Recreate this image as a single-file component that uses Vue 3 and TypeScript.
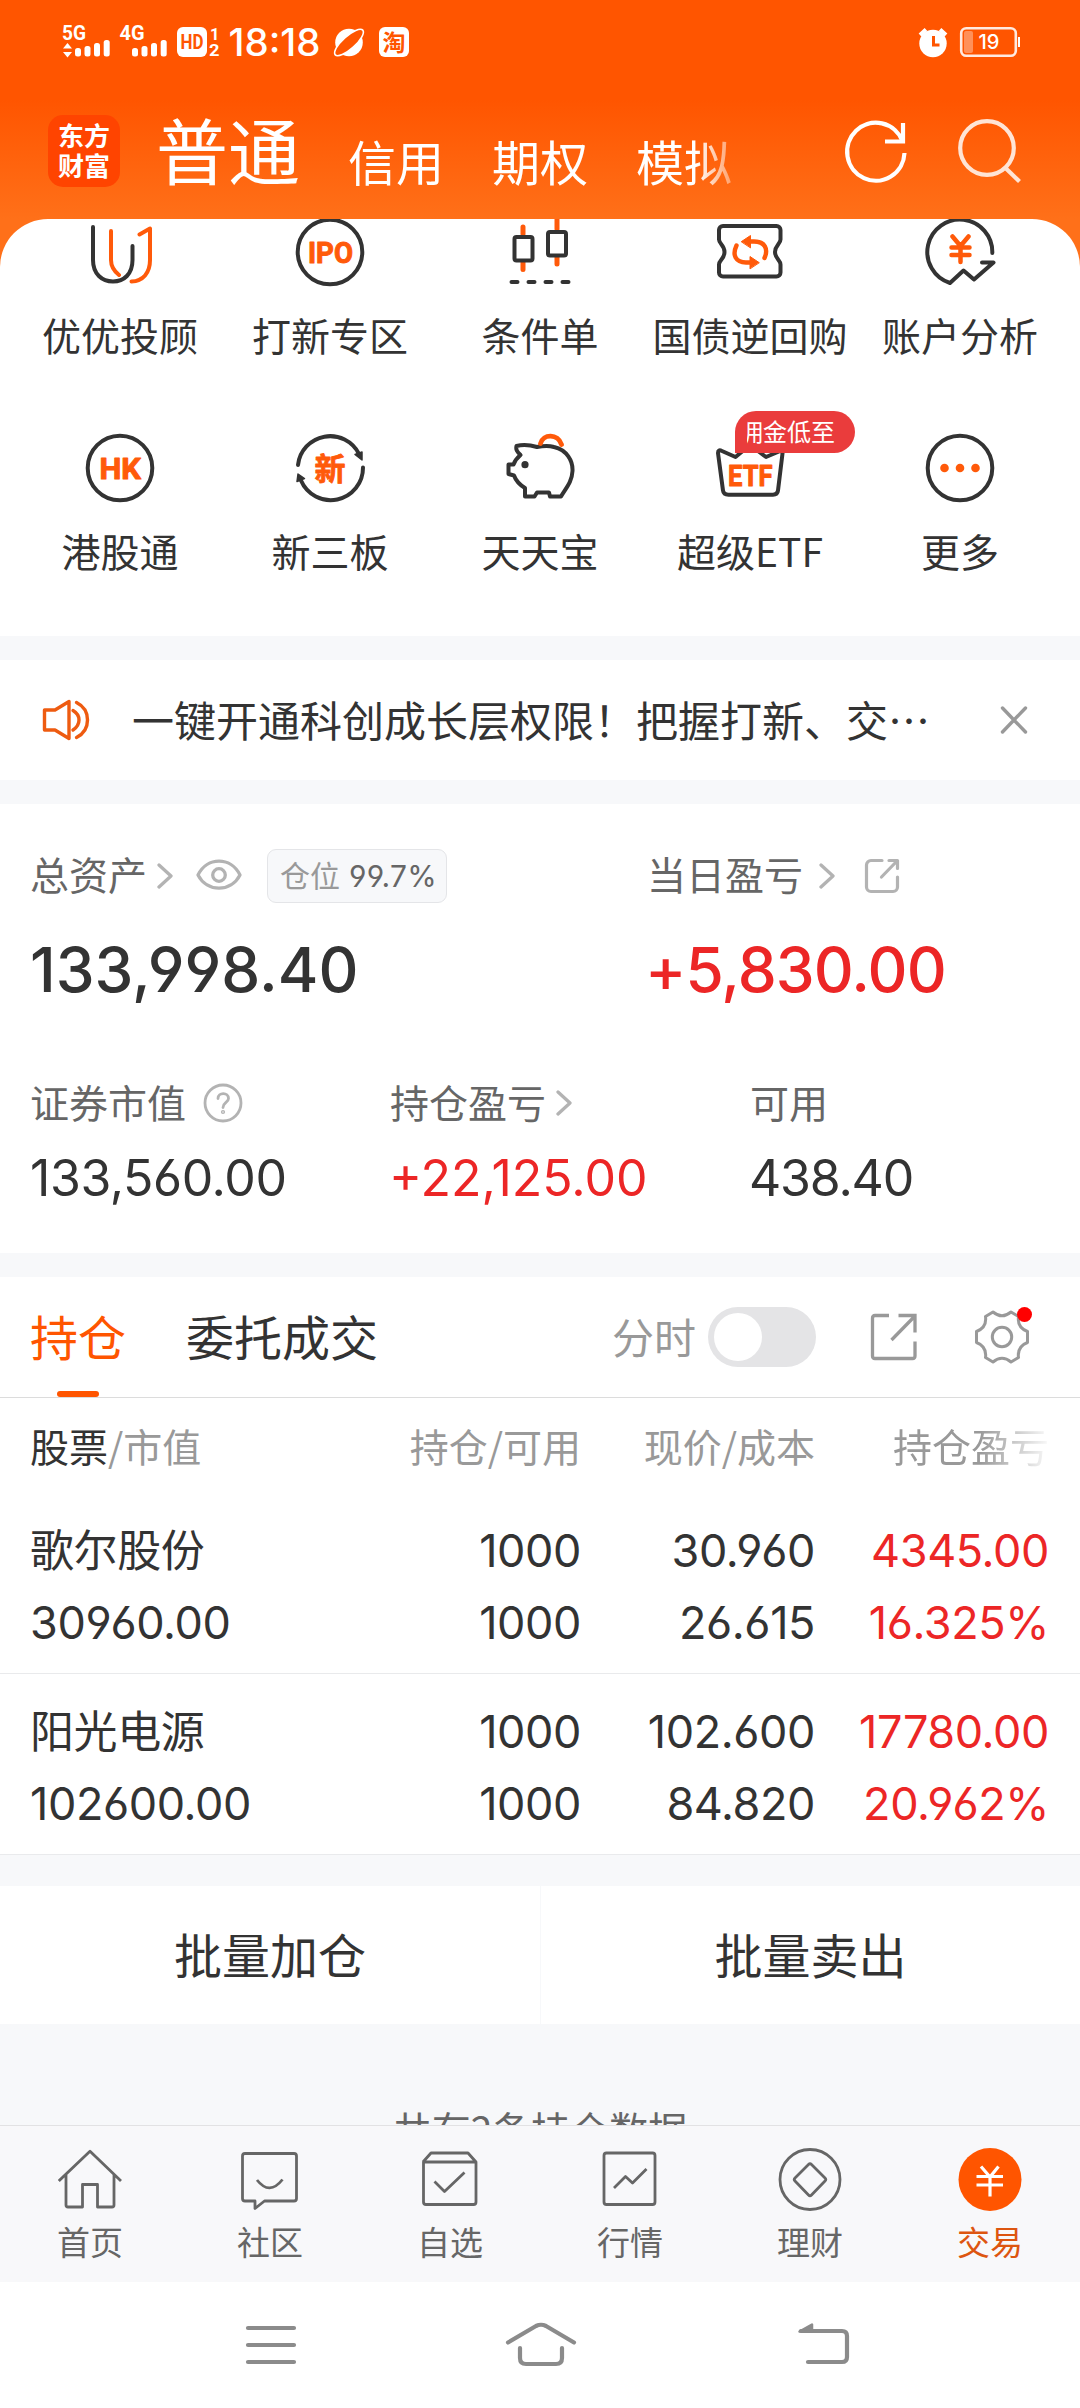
<script setup lang="ts">
interface Service {
  id: string
  label: string
  badge?: string
}
interface Holding {
  name: string
  value: string
  held: string
  usable: string
  price: string
  cost: string
  profit: string
  rate: string
}

const accountTabs: string[] = ['普通', '信用', '期权', '模拟']

const services: Service[] = [
  { id: 'advisor', label: '优优投顾' },
  { id: 'ipo', label: '打新专区' },
  { id: 'condition', label: '条件单' },
  { id: 'repo', label: '国债逆回购' },
  { id: 'analysis', label: '账户分析' },
  { id: 'hk', label: '港股通' },
  { id: 'neeq', label: '新三板' },
  { id: 'piggy', label: '天天宝' },
  { id: 'etf', label: '超级ETF', badge: '佣金低至' },
  { id: 'more', label: '更多' },
]

const holdings: Holding[] = [
  { name: '歌尔股份', value: '30960.00', held: '1000', usable: '1000', price: '30.960', cost: '26.615', profit: '4345.00', rate: '16.325%' },
  { name: '阳光电源', value: '102600.00', held: '1000', usable: '1000', price: '102.600', cost: '84.820', profit: '17780.00', rate: '20.962%' },
]

const navItems = [
  { id: 'home', label: '首页' },
  { id: 'community', label: '社区' },
  { id: 'watchlist', label: '自选' },
  { id: 'market', label: '行情' },
  { id: 'wealth', label: '理财' },
  { id: 'trade', label: '交易' },
]
</script>

<template>
  <div class="screen" lang="zh-CN">
    <header class="top">
      <div class="status">
        <svg class="status-left" width="360" height="40" viewBox="60 22 360 40" fill="#fff">
          <text x="62" y="40" class="st-bold" font-size="20" textLength="24" lengthAdjust="spacingAndGlyphs">5G</text>
          <path d="M67.500 43l4.500 5.500h-9zM67.500 57.500l-4.500-5.500h9z" />
          <rect x="75" y="48" width="6" height="8.500" rx="2.500" /><rect x="84.500" y="46" width="6" height="10.500" rx="2.500" />
          <rect x="94" y="43" width="6" height="13.500" rx="2.500" /><rect x="103.700" y="40" width="6" height="16.500" rx="2.500" />
          <text x="119.500" y="40" class="st-bold" font-size="20" textLength="25" lengthAdjust="spacingAndGlyphs">4G</text>
          <rect x="132" y="48" width="6" height="8.500" rx="2.500" /><rect x="141.500" y="46" width="6" height="10.500" rx="2.500" />
          <rect x="151" y="43" width="6" height="13.500" rx="2.500" /><rect x="160.700" y="40" width="6" height="16.500" rx="2.500" />
          <rect x="177" y="27" width="30" height="30" rx="6" />
          <text x="180.500" y="49" class="st-bold" font-size="19.500" fill="#ff5500" textLength="23" lengthAdjust="spacingAndGlyphs">HD</text>
          <text x="210" y="39.500" class="st-bold" font-size="16.500">1</text>
          <text x="209" y="56" class="st-bold" font-size="16.500" textLength="10.500" lengthAdjust="spacingAndGlyphs">2</text>
          <text x="228.500" y="56" class="st-time" font-size="37.500" textLength="92" lengthAdjust="spacingAndGlyphs">18:18</text>
          <circle cx="349" cy="42.500" r="13.800" />
          <ellipse cx="349" cy="42.500" rx="18.500" ry="6.300" transform="rotate(-42 349 42.500)" fill="#ff5500" stroke="#fff" stroke-width="1.600" />
          <rect x="379" y="27" width="30" height="30" rx="6" />
          <text x="382.500" y="50.500" class="st-cn" font-size="23" fill="#ff5500">淘</text>
        </svg>
        <svg class="status-right" width="106" height="40" viewBox="916 22 106 40" fill="#fff">
          <circle cx="933" cy="43.500" r="13.700" />
          <path d="M920 35l6-5.500M946 35l-6-5.500" stroke="#fff" stroke-width="4" />
          <path d="M933.500 36v9h6" fill="none" stroke="#ff5500" stroke-width="3" />
          <rect x="961.200" y="28.200" width="54.600" height="27.600" rx="5" fill="none" stroke="#fff" stroke-opacity=".88" stroke-width="2.600" />
          <rect x="964" y="31" width="9" height="22" rx="2" fill="#ff9059" />
          <path d="M1018 37h2v10h-2z" />
          <text x="978.500" y="49.300" class="st-mid" font-size="20" textLength="21" lengthAdjust="spacingAndGlyphs">19</text>
        </svg>
      </div>
      <div class="titlebar">
        <div class="brand"><span>东方</span><span>财富</span></div>
        <nav class="accounts">
          <span v-for="(t, i) in accountTabs" :key="t" :class="{ current: i === 0 }">{{ t }}</span>
        </nav>
        <svg class="act" width="72" height="72" viewBox="840 116 72 72" fill="none" stroke="#fff" stroke-width="4.200">
          <path d="M904.500 153A28.700 29 0 1 1 902.500 141" /><path d="M903 123v18.500h-18" />
        </svg>
        <svg class="act search" width="72" height="72" viewBox="954 116 72 72" fill="none" stroke="#ffe4d5" stroke-width="4.200">
          <circle cx="987" cy="148" r="26.800" /><path d="M1005.500 168l14 13.500" />
        </svg>
      </div>
    </header>

    <section class="services">
      <div v-for="s in services" :key="s.id" class="service">
        <svg width="72" height="72" viewBox="0 0 72 72" fill="none" stroke="#333" stroke-width="4" stroke-linecap="round" stroke-linejoin="round">
          <template v-if="s.id === 'advisor'">
            <path d="M9 11V44C9 58 18 65.500 29 65.500S48.500 58 48.500 44V30" />
            <g stroke="#ff5a0a"><path d="M27 15V44C27 51 30 55 35 59" /><path d="M55.500 18.500L66 12.500V44C66 57 59 65 47.500 65.500" /></g>
          </template>
          <template v-else-if="s.id === 'ipo'">
            <circle cx="36" cy="36" r="32.300" />
            <text x="14" y="47.200" font-size="30" class="glyph" textLength="45" lengthAdjust="spacingAndGlyphs">IPO</text>
          </template>
          <template v-else-if="s.id === 'condition'">
            <g stroke="#ff5a0a" stroke-width="5"><path d="M19 11v7M19 46v7.500M53 3v10M53 41v7" /></g>
            <rect x="10.500" y="21" width="18" height="23.500" rx="2" /><rect x="44" y="16" width="18" height="23.500" rx="2" />
            <path d="M7.500 66h6M24.500 66h6M41.500 66h6M58.500 66h6" />
          </template>
          <template v-else-if="s.id === 'repo'">
            <path d="M9 10H62.500a4 4 0 0 1 4 4V23.500C66.500 28 61 29.500 61 36S66.500 44 66.500 48.500V56.500a4 4 0 0 1-4 4H9a4 4 0 0 1-4-4V48.500C5 44 10.500 43 10.500 36S5 28 5 23.500V14a4 4 0 0 1 4-4z" />
            <g stroke="#ff5a0a" stroke-width="4.400"><path d="M33 25.500H40C51 25.500 54.500 33 50.500 42" /><path d="M22.500 29.500C18 39 21.500 46.500 32 46.500H38" /></g>
            <path d="M27.500 25.500l9-6v12zM45 46.500l-9-6v12z" fill="#ff5a0a" stroke="#ff5a0a" stroke-width="1" />
          </template>
          <template v-else-if="s.id === 'analysis'">
            <path d="M68.300 37A32.500 32.500 0 1 0 26 67L39.500 54.500L50 63.500L69.500 46.500H58" />
            <path d="M28.500 20.500L36.500 30L44.500 20.500M36.500 30V46M27.500 31.500H45.500M27.500 39H45.500" stroke="#ff5a0a" stroke-width="4.500" />
          </template>
          <template v-else-if="s.id === 'hk'">
            <circle cx="36" cy="36" r="32.300" />
            <text x="15.500" y="47.200" font-size="30" class="glyph" textLength="41.500" lengthAdjust="spacingAndGlyphs">HK</text>
          </template>
          <template v-else-if="s.id === 'neeq'">
            <path d="M4 33A32.300 32.300 0 0 1 65 22" /><path d="M69 35.500A32.300 32.300 0 0 1 7 48.500" />
            <path d="M61 22.500l7-2.500v8zM4 42l-1 7.500 7.500-3z" fill="#333" stroke-width="1.500" />
            <text x="36" y="47.500" font-size="31" text-anchor="middle" class="glyph-cn">新</text>
          </template>
          <template v-else-if="s.id === 'piggy'">
            <path d="M12.500 14C20 12 28 13.500 33 15C38 14 45 13.500 50 15C63 18 69 29 68.500 39C68 50 62 56 57 64.500H46L45 60.500H33L30.500 64.500H21V56C16 53 12 49 10 43.500L4.500 42V32.500H9.500C11 28 13 26 16.500 23C13.500 20 11.500 18 12.500 14z" />
            <circle cx="21" cy="32.700" r="3.600" fill="#333" stroke="none" />
            <path d="M36.500 11.500C39 1.500 54 1.500 57.500 12.500" stroke="#ff5a0a" stroke-width="4.800" />
          </template>
          <template v-else-if="s.id === 'etf'">
            <path d="M4 21Q4 17 8 19L21.500 25L36 13L52 25L65 19.500Q69 18 68.500 21.500L64 58.500Q63.500 62.700 59 62.700H14.500Q9.500 62.700 9 58.500z" />
            <text x="14" y="53.500" font-size="30" class="glyph" textLength="44.500" lengthAdjust="spacingAndGlyphs">ETF</text>
          </template>
          <template v-else>
            <circle cx="36" cy="36" r="32.300" />
            <g fill="#ff5a0a" stroke="none"><circle cx="20.500" cy="36" r="4.300" /><circle cx="36" cy="36" r="4.300" /><circle cx="51.500" cy="36" r="4.300" /></g>
          </template>
        </svg>
        <span class="service-label">{{ s.label }}</span>
        <div v-if="s.badge" class="promo"><div class="promo-clip"><span>{{ s.badge }}</span></div></div>
      </div>
    </section>

    <section class="notice">
      <svg width="48" height="44" viewBox="42 698 48 44" fill="none" stroke="#ee5b10" stroke-width="3.400" stroke-linecap="round" stroke-linejoin="round">
        <path d="M44.500 710H55L69 701.500V738.500L55 730H44.500zM73 710.500Q79 714 79 720T73 730M76.500 702.500Q87.500 708 87.500 720T76.500 737.500" />
      </svg>
      <p>一键开通科创成长层权限！把握打新、交…</p>
      <svg class="close" width="30" height="30" viewBox="-15 -15 30 30" stroke="#999" stroke-width="3.400" stroke-linecap="round"><path d="M-11.500-12L11.500 12M11.500-12L-11.500 12" /></svg>
    </section>

    <section class="assets">
      <div class="primary">
        <div class="total">
          <div class="label">
            <span>总资产</span>
            <svg class="chev c1" width="16" height="28" viewBox="0 0 16 28"><path d="M2 3l12 11L2 25" /></svg>
            <svg class="eye" width="46" height="34" viewBox="0 0 46 34" fill="none" stroke="#b3b3b3" stroke-width="3.300"><path d="M2 17C11-1.500 35-1.500 44 17C35 34.500 11 34.500 2 17z" stroke-linejoin="round" /><circle cx="23" cy="17" r="6.300" /></svg>
            <div class="ratio"><span>仓位</span><b>99.7%</b></div>
          </div>
          <div class="big">133,998.40</div>
        </div>
        <div class="day">
          <div class="label">
            <span>当日盈亏</span>
            <svg class="chev c2" width="16" height="28" viewBox="0 0 16 28"><path d="M2 3l12 11L2 25" /></svg>
            <svg class="share" width="36" height="36" viewBox="0 0 36 36" fill="none" stroke="#b3b3b3" stroke-width="3.200" stroke-linecap="round" stroke-linejoin="round"><path d="M18 2.500H7A4.500 4.500 0 0 0 2.500 7V29A4.500 4.500 0 0 0 7 33.500H29A4.500 4.500 0 0 0 33.500 29V19M25 2.500H33.500V10.500M33 3L17.500 19" /></svg>
          </div>
          <div class="big up">+5,830.00</div>
        </div>
      </div>
      <div class="secondary">
        <div>
          <div class="label"><span>证券市值</span>
            <svg class="help" width="40" height="40" viewBox="0 0 40 40" fill="none" stroke="#b3b3b3" stroke-width="2.800" stroke-linecap="round"><circle cx="20" cy="20" r="18" /><path d="M15 15.500C15 9 25.500 9 25.500 15.500C25.500 19.500 20 19.500 20 24.500" /><circle cx="20" cy="29" r=".7" /></svg>
          </div>
          <div class="mid">133,560.00</div>
        </div>
        <div>
          <div class="label"><span>持仓盈亏</span><svg class="chev c3" width="16" height="28" viewBox="0 0 16 28"><path d="M2 3l12 11L2 25" /></svg></div>
          <div class="mid up">+22,125.00</div>
        </div>
        <div>
          <div class="label"><span>可用</span></div>
          <div class="mid free">438.40</div>
        </div>
      </div>
    </section>

    <section class="positions">
      <div class="tabs">
        <span class="tab on">持仓</span>
        <span class="tab">委托成交</span>
        <div class="tools">
          <span class="minute">分时</span>
          <i class="toggle"></i>
          <svg class="out" width="48" height="48" viewBox="0 0 48 48" fill="none" stroke="#999" stroke-width="3.300"><path d="M19 2.500H5Q2.500 2.500 2.500 5V43Q2.500 45.500 5 45.500H42.500Q45 45.500 45 43V28.500M28.500 2.500H45V19.500M44 4L21.500 27" /></svg>
          <div class="gear">
            <svg width="56" height="56" viewBox="-28 -28 56 56" fill="none" stroke="#999" stroke-width="3" stroke-linejoin="round">
              <path d="M-9-25Q0-17.500 9-25L16.500-20.500Q15-9.500 25.500-5.500V5.500Q15 9.500 16.500 20.500L9 25Q0 17.500-9 25L-16.500 20.500Q-15 9.500-25.500 5.500V-5.500Q-15-9.500-16.500-20.500z" /><circle r="9.700" />
            </svg>
            <i class="dot"></i>
          </div>
        </div>
      </div>
      <div class="grid head">
        <span><em>股票</em>/市值</span><span>持仓/可用</span><span>现价/成本</span><span class="fade">持仓盈亏</span>
      </div>
      <div v-for="h in holdings" :key="h.name" class="holding">
        <div class="grid line">
          <span class="name">{{ h.name }}</span><span>{{ h.held }}</span><span>{{ h.price }}</span><span class="up">{{ h.profit }}</span>
        </div>
        <div class="grid line">
          <span>{{ h.value }}</span><span>{{ h.usable }}</span><span>{{ h.cost }}</span><span class="up">{{ h.rate }}</span>
        </div>
      </div>
      <div class="batch"><button>批量加仓</button><button>批量卖出</button></div>
      <p class="summary">共有2条持仓数据</p>
    </section>

    <nav class="tabbar">
      <div v-for="n in navItems" :key="n.id" :class="['nav', { active: n.id === 'trade' }]">
        <svg width="64" height="64" viewBox="0 0 64 64" fill="none" stroke="#666" stroke-width="2.800" stroke-linejoin="round">
          <path v-if="n.id === 'home'" d="M.8 34L32 4.200L63 34M8 28V58Q8 60 10 60H24.500V37.500H39.500V60H54Q56 60 56 58V28" />
          <template v-else-if="n.id === 'community'"><path d="M7 6.500H56Q58.500 6.500 58.500 9V51.500Q58.500 54 56 54H26.500L17 61.500V54H7Q4.500 54 4.500 51.500V9Q4.500 6.500 7 6.500z" /><path d="M19 33Q31.500 49 44.500 32.500" /></template>
          <path v-else-if="n.id === 'watchlist'" d="M5 15L13 6H50L58 15V55Q58 57.500 55.500 57.500H8Q5.500 57.500 5.500 55V15H58M16.500 34.500L26.500 44.500L46.500 25.500" />
          <template v-else-if="n.id === 'market'"><rect x="6" y="6" width="51" height="51.500" rx="2.500" /><path d="M16 41L27.500 29.500L34.500 36L48.500 22" /></template>
          <template v-else-if="n.id === 'wealth'"><circle cx="32" cy="32.500" r="30" /><path d="M30.500 17.500Q32 16 33.500 17.500L47 31Q48.500 32.500 47 34L33.500 48Q32 49.500 30.500 48L17 34Q15.500 32.500 17 31z" /></template>
          <template v-else><circle cx="32" cy="32.500" r="31.500" fill="#ff5500" stroke="none" /><path d="M23 19.500L32 30L40.500 19.500M32 30V49.500M18.500 29.500H45M18.500 38H45" stroke="#fff" stroke-width="3.200" /></template>
        </svg>
        <span>{{ n.label }}</span>
      </div>
    </nav>
    <div class="system">
      <svg width="1080" height="126" viewBox="0 2282 1080 126" fill="none" stroke="#8b8b8b" stroke-width="4.200" stroke-linecap="round" stroke-linejoin="round">
        <path d="M248 2328H294M248 2345H294M248 2362H294" />
        <path d="M508 2342.500L536 2326Q541 2323.500 546 2326L574 2342.500M520 2348V2358Q520 2364 526 2364H556Q562 2364 562 2358V2348" />
        <path d="M808 2362H842Q847 2362 847 2357V2336Q847 2331 842 2331H801" /><path d="M799.500 2331.500L812 2324.500V2331.500z" fill="#8b8b8b" stroke-width="2.500" />
      </svg>
    </div>
  </div>
</template>

<style>
html, body { margin: 0; background: #fff; }
</style>

<style scoped>
* { box-sizing: border-box; }
.screen {
  width: 1080px; height: 2408px; overflow: hidden; display: flex; flex-direction: column;
  background: #f7f8fa; color: #333; font-family: "Noto Sans CJK SC", sans-serif; font-size: 39px;
}
p { margin: 0; }
i, em { font-style: normal; }
svg { display: block; flex: none; }
.top { height: 267px; flex: none; background: linear-gradient(#ff5500 0, #ff5500 100px, #ff7019 219px); }
.status { height: 84px; padding: 22px 58px 0 60px; display: flex; justify-content: space-between; }
.st-bold { font-family: Roboto, sans-serif; font-weight: 700; }
.st-mid { font-family: Inter, sans-serif; font-weight: 500; }
.st-time { font-family: Inter, sans-serif; font-weight: 500; }
.st-cn { font-family: "Noto Sans CJK SC", sans-serif; font-weight: 700; }
.titlebar { height: 135px; display: flex; align-items: flex-start; padding-left: 48px; color: #fff; }
.brand {
  width: 72px; height: 72px; margin-top: 31px; border-radius: 15px; background: #ff4400; flex: none;
  display: flex; flex-direction: column; align-items: center; justify-content: center; padding-bottom: 3px;
}
.brand span { font: 700 26px/30px "Noto Sans CJK SC", sans-serif; }
.accounts {
  width: 720px; flex: none; margin: 14px 0 0; padding-left: 36px; height: 106px; display: flex; gap: 48px; align-items: baseline; font-size: 48px; line-height: 100px;
  -webkit-mask: linear-gradient(90deg, #000 576px, transparent 634px); mask: linear-gradient(90deg, #000 576px, transparent 634px);
}
.accounts span { position: relative; top: 2px; }
.accounts .current { font-size: 72px; top: 0; }
.act { margin-top: 32px; }
.search { margin-left: 42px; }

.services {
  height: 417px; margin-top: -48px; border-radius: 48px 48px 0 0; background: #fff; flex: none; overflow: hidden;
  padding: 0 15px; display: grid; grid-template-columns: repeat(5, 210px); grid-auto-rows: 216px;
}
.service { position: relative; top: -3px; display: flex; flex-direction: column; align-items: center; }
.service-label { line-height: 56px; margin-top: 18px; white-space: nowrap; }
.glyph { font-family: Roboto, sans-serif; font-weight: 700; fill: #ff5a0a; stroke: #ff5a0a; stroke-width: 1px; }
.glyph-cn { font-family: "Noto Sans CJK SC", sans-serif; font-weight: 700; fill: #ff5a0a; stroke: #ff5a0a; stroke-width: .8px; }
.promo { position: absolute; left: 90px; top: -21px; width: 120px; height: 42px; border-radius: 21px 21px 21px 0; background: #ea3c3c; padding: 0 20px 0 12px; }
.promo-clip { overflow: hidden; height: 42px; display: flex; justify-content: flex-end; }
.promo-clip span { font-size: 24px; line-height: 40px; color: #fff; white-space: nowrap; }

.notice { height: 120px; margin: 24px 0; padding: 0 51px 0 42px; background: #fff; flex: none; display: flex; align-items: center; }
.notice p { margin-left: 42px; font-size: 42px; line-height: 60px; padding-bottom: 3px; white-space: nowrap; }
.close { margin-left: auto; }

.assets { height: 449px; background: #fff; flex: none; padding: 44px 30px 0; }
.primary { display: flex; height: 227px; }
.total { width: 617px; }
.label { height: 56px; display: flex; align-items: center; color: #666; }
.label > span { line-height: 56px; padding-bottom: 4px; white-space: nowrap; }
.primary .label > span { padding-bottom: 6px; }
.chev { fill: none; stroke: #b3b3b3; stroke-width: 3.3; stroke-linecap: round; stroke-linejoin: round; }
.c1 { margin-left: 10px; }
.c2 { margin-left: 16px; }
.c3 { margin-left: 10px; }
.eye { margin-left: 23px; margin-top: -2px; }
.share { margin-left: 29px; }
.ratio {
  margin-left: 25px; width: 180px; height: 54px; border: 1px solid #e4e5e8; border-radius: 9px; background: #f7f8fa;
  display: flex; align-items: center; justify-content: space-between; padding: 0 9px 0 12px; font-size: 30px; color: #999;
}
.ratio span { padding-bottom: 4px; line-height: 44px; }
.ratio b { font: 400 30px/50px Inter, sans-serif; letter-spacing: .3px; color: #666; font-feature-settings: "cv03", "cv04"; }
.help { margin-left: 17px; }
.big, .mid, .line { font-family: Inter, sans-serif; font-feature-settings: "cv03", "cv04"; white-space: nowrap; }
.big { font-size: 62px; font-weight: 500; line-height: 76px; margin-top: 28px; }
.big.up { letter-spacing: -.9px; margin-left: -2px; }
.mid { font-size: 50px; line-height: 60px; margin-top: 17px; letter-spacing: -.4px; }
.mid.up { letter-spacing: 0; margin-left: -1px; }
.mid.free { letter-spacing: -1.2px; margin-left: -1px; }
.up { color: #ec2626; }
.secondary { display: grid; grid-template-columns: 360px 360px 1fr; }

.positions { margin-top: 24px; height: 848px; flex: none; overflow: hidden; }
.tabs { height: 121px; background: #fff; border-bottom: 1px solid #dcdcdc; padding: 0 50px 0 30px; display: flex; }
.tab { position: relative; font-size: 48px; line-height: 116px; margin-right: 60px; }
.on { color: #ff5500; }
.on::after { content: ""; position: absolute; left: 27px; top: 114px; width: 42px; height: 6px; border-radius: 3px; background: #ff5500; }
.tools { margin-left: auto; display: flex; align-items: center; }
.minute { font-size: 42px; color: #999; padding-bottom: 4px; }
.toggle { width: 108px; height: 60px; margin-left: 12px; border-radius: 30px; background: #e4e4e6; padding: 6px; display: block; }
.toggle::before { content: ""; display: block; width: 48px; height: 48px; border-radius: 50%; background: #fff; }
.out { margin-left: 54px; }
.gear { position: relative; margin-left: 56px; }
.dot { position: absolute; left: 43px; top: -2px; width: 15px; height: 15px; border-radius: 50%; background: #f00; }
.grid { display: grid; grid-template-columns: 318px 234px 234px 234px; padding: 0 30px; text-align: right; white-space: nowrap; }
.grid > :first-child { text-align: left; }
.head { height: 95px; line-height: 94px; background: #fff; color: #999; padding-right: 31px; grid-template-columns: 317px 234px 234px 234px; }
.head em { color: #333; }
.fade { -webkit-mask: linear-gradient(90deg, #000 165px, transparent 238px); mask: linear-gradient(90deg, #000 165px, transparent 238px); }
.holding { height: 181px; background: #fff; border-bottom: 1px solid #e9eaec; padding-top: 22px; }
.line { height: 72px; line-height: 72px; font-size: 45px; letter-spacing: -.4px; padding: 0 31px 0 30px; grid-template-columns: 317px 234px 234px 234px; }
.name { font-family: "Noto Sans CJK SC", sans-serif; font-size: 44px; letter-spacing: -.4px; line-height: 66px; }
.batch { height: 138px; margin-top: 31px; display: grid; grid-template-columns: 1fr 1fr; background: #fff; }
.batch button { border: 0; background: none; padding: 0 0 4px; color: #333; font: 48px/70px "Noto Sans CJK SC", sans-serif; }
.batch button + button { border-left: 1px solid #f7f8fa; }
.summary { margin-top: 76px; line-height: 56px; text-align: center; color: #666; }

.tabbar { height: 157px; border-top: 1px solid #e2e2e4; background: #f8f8fa; display: grid; grid-template-columns: repeat(6, 1fr); flex: none; }
.nav { display: flex; flex-direction: column; align-items: center; padding-top: 21px; font-size: 33px; color: #666; }
.nav span { line-height: 48px; margin-top: 6px; }
.active span { color: #dd5510; }
.system { height: 126px; background: #fff; flex: none; }
</style>
